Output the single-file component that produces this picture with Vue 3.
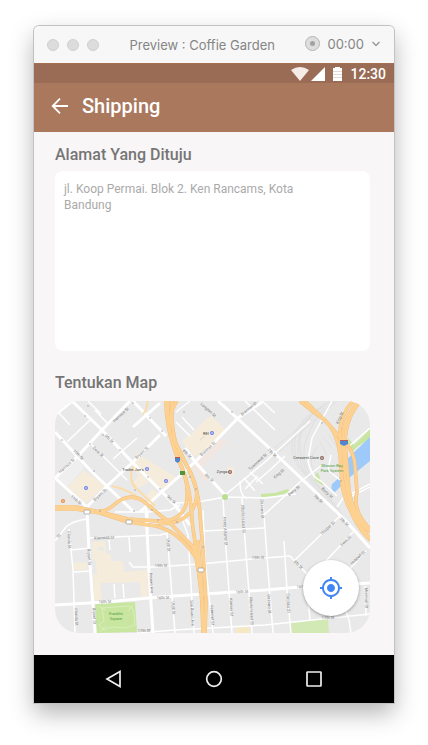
<script setup>
import { ref } from 'vue'

const address = ref('jl. Koop Permai. Blok 2. Ken Rancams, Kota\nBandung')

const minorRoads = [
  'M58 412L70 425', 'M67 442L90 420', 'M95 410L108 424', 'M113 459L137 438', 'M90 443L127 480',
  'M60 404L52 412', 'M88 401L101 414', 'M176 422L190 436', 'M182 417L194 430', 'M245 401L275 430', 'M262 401L275 413',
  'M190 401L176 412', 'M225 495L265 462L310 421', 'M240 481Q240 497 247 498', 'M244 478L255 491M250 472L263 484M245 489L258 476',
  'M175 503L198 502L225 497L265 498L296 494', 'M262 499L264 515L300 482L322 465',
  'M285 456L270 470L256 482', 'M340 454L370 428', 'M331 455L328 470L340 480', 'M332 401L312 438L308 460Q311 477 321 481L337 496',
  'M337 507L343 498L370 484', 'M350 497L370 487',
  'M223 498L225 535L232 633', 'M242 498L245 540L252 633', 'M264 515L268 570L273 633', 'M284 541L287 590L291 633',
  'M167 533L170 570L175 633', 'M176 503L188 535L194 633', 'M203 510L205 560L213 633', 'M115 512L147 512L170 510L180 505',
  'M90 538L160 535L168 533', 'M203 531L264 528', 'M155 567L200 564L265 558L290 556L305 572L312 579',
  'M129 562L133 567L160 567', 'M87 519Q72 521 66 527L55 541', 'M69 529L73 570L75 633',
  'M71 550L90 548', 'M74 572L91 571', 'M129 537L130 552', 'M109 540L110 550', 'M114 584L115 598M123 584L124 598',
  'M137 633L175 630L212 628L265 625L370 614', 'M295 560L340 516', 'M325 562L353 532', 'M345 574L366 551',
  'M308 598L310 620', 'M344 605L349 620L351 633', 'M365 586L366 616',
]
const majorRoads = [
  'M55 432L91 471L133 511', 'M72 401L102 430L133 463L174 504L190 525', 'M72 401L55 415', 'M133 401L166 436M185 448L196 463L225 495',
  'M160 403L133 427', 'M160 435L133 462L108 485L87 507', 'M130 401L102 430L77 457L55 478', 'M55 478L87 507',
  'M262 402L238 418L195 462L155 498L140 512', 'M218 401L238 419L265 444L345 520L370 548',
  'M87 510L89 550L95 633', 'M55 605L105 602L160 597L265 590L300 587L370 583',
  'M146 508L149 573L153 633', 'M147 510L147 530',
]
const rail = [
  'M337 401Q298 435 279 452', 'M334 401Q294 436 276 450', 'M330 401Q292 434 274 448', 'M327 403Q286 426 307 473L340 510',
  'M322 407Q287 430 303 469L337 508', 'M318 409Q283 433 300 467L337 512', 'M314 410Q280 438 298 466L338 516',
  'M324 408Q301 438 304 458Q307 477 342 514', 'M319 445Q303 464 320 477', 'M324 438L332 448M320 442L327 455M329 435L336 446',
]
const freeways = [
  'M98 511Q106 512 115 504Q132 490 148 505L172 525L193 547L199 565',
  'M55 507L76 507L100 512L128 519L158 521Q180 522 186 505C190 487 184 470 177 457Q167 430 168 401',
  'M158 523Q177 526 190 513Q199 501 196 488Q192 472 184 461Q170 440 172 401',
  'M55 509L76 509L100 513L128 522L156 526Q180 532 196 558L200 580',
  'M166 401Q166 426 174 447L183 471Q191 490 192 521L197 557L202 602L203 633',
  'M172 435L188 468Q199 490 200 515L203 550L206 602L205 633',
  'M177 401Q169 412 171 426',
  'M198 540L201 581L204 633',
]
const eastFreeways = [
  'M300 401Q312 411 322 418Q336 428 340 454L342 485Q346 506 355 517',
  'M305 401Q328 423 338 435Q354 448 355 466L357 492Q352 511 370 529',
  'M353 401Q338 417 340 440L342 478Q348 519 370 540',
  'M359 401Q342 419 343 440L345 477Q350 517 372 541',
  'M361 401Q346 416 345 443L349 490Q353 517 370 532',
]
const ramps = ['M133 467Q128 480 136 488L155 506', 'M148 401L146 410L143 414', 'M112 486Q130 489 146 504']

const streets = [
  ['Harrison St', 121, 415, -42], ['9th St', 109, 439, 45], ['10th St', 78, 455, 46], ['Dore St', 98, 452, 43],
  ['Harrison St', 67, 466, -42], ['Bryant St', 142, 453, -42], ['Bryant St', 100, 495, -42], ['11th St', 76, 500, 40],
  ['Langton St', 208, 410, 43], ['Brannan St', 249, 409, -40], ['Brannan St', 208, 449, -43], ['8th St', 187, 454, 44],
  ['8th St', 209, 478, 42], ['Townsend St', 258, 462, -42], ['9th St', 171, 500, 42], ['7th St', 272, 453, 44],
  ['King St', 279, 474, -40], ['Berry St', 294, 491, -39], ['7th St', 318, 499, 42], ['Berry St', 327, 493, 42],
  ['King St', 340, 418, -65], ['Florida St', 69, 540, 87], ['Bryant St', 89, 557, 86], ['Alameda St', 104, 538, -3],
  ['Potrero Ave', 151, 583, 86], ['16th St', 105, 602, -3], ['Florida St', 76, 617, 87], ['Bryant St', 94, 616, 87],
  ['17th St', 144, 631, -2], ['Utah St', 168, 545, 87], ['15th St', 161, 566, -3], ['Henry Adams St', 225, 531, 87],
  ['Rhode Island St', 243, 519, 87], ['De Haro St', 262, 509, 87], ['15th St', 258, 558, -3], ['16th St', 163, 598, -3],
  ['16th St', 242, 592, -3], ['Utah St', 173, 608, 87], ['San Bruno Ave', 192, 613, 87], ['Vermont St', 212, 615, 87],
  ['Kansas St', 231, 607, 87], ['Rhode Island St', 251, 611, 87], ['De Haro St', 269, 604, 87], ['Carolina St', 288, 603, 87],
  ['8th St', 298, 565, 45], ['16th St', 303, 587, -3], ['Hooper St', 328, 528, -43], ['7th St', 344, 522, 43],
  ['Irwin St', 346, 541, -43], ['Hubbell St', 358, 558, -43], ['Missouri St', 366, 598, 88], ['17th St', 328, 618, -3],
  ['St', 59, 536, -50],
]
const arrows = [
  [88, 406], [85, 416], [62, 440], [103, 435], [90, 444], [120, 450], [94, 471], [133, 403], [150, 418], [148, 477],
  [134, 511], [162, 431], [184, 412], [232, 412], [160, 489], [135, 490], [100, 511], [158, 520], [177, 522], [196, 489],
  [203, 547], [190, 477], [152, 510], [322, 423], [341, 481],
]
const places = [
  [86, 488, '#6f7fe8'], [147, 469, '#6f7fe8'], [166, 481, '#6f7fe8'], [212, 433, '#6f7fe8'], [63, 501, '#ef8a35'],
  [230, 472, '#8d6257'], [322, 458, '#8d6257'],
]
const shields = [[87, 512], [129, 522], [201, 570]]
</script>

<template>
  <main class="page">
    <section class="window">
      <header class="titlebar">
        <div class="lights"><i></i><i></i><i></i></div>
        <h1 class="window-title">Preview : Coffie Garden</h1>
        <div class="recorder">
          <button class="record" type="button" aria-label="Record"><i></i></button>
          <span class="timer">00:00</span>
          <svg class="chevron" viewBox="0 0 10 6"><path d="M1.500 1L5 4.500L8.500 1" /></svg>
        </div>
      </header>

      <div class="status">
        <svg class="signals" viewBox="0 0 52 14">
          <path d="M1 3Q10-3 19 3L10 14Z" fill="#f5ece8" />
          <path d="M35 0V14H21Z" fill="#fff" />
          <path d="M43 1H45V0H50V1H52V14H43Z" fill="#fff" />
          <path d="M43 4.500H52M43 7.500H52M43 10.500H52" stroke="#e4dad5" stroke-width="1" />
        </svg>
        <span>12:30</span>
      </div>

      <header class="appbar">
        <button type="button" class="back" aria-label="Kembali">
          <svg viewBox="0 0 24 24"><path d="M20 12H5.500M12 4.700L4.700 12L12 19.300" /></svg>
        </button>
        <h2>Shipping</h2>
      </header>

      <div class="content">
        <label class="heading" for="address">Alamat Yang Dituju</label>
        <textarea id="address" v-model="address" class="address" spellcheck="false"></textarea>

        <h3 class="heading">Tentukan Map</h3>
        <div class="map">
          <svg class="map-drawing" viewBox="55 401 315 232">
            <rect x="55" y="401" width="315" height="232" fill="#e9e9e9" />
            <g fill="#f5ecdb">
              <path d="M68 487L84 470L105 486L85 504Z" />
              <path d="M137 453L177 478L162 490L133 470Z" />
              <path d="M140 474L149 482L135 490L134 482ZM152 489L160 494L152 501L146 496Z" />
              <path d="M181 441L192 433L204 421L211 416L226 430L214 441L195 457Z" />
              <path d="M227 467H234V475H227Z" />
              <path d="M92 542L105 541L106 553L111 555V561L123 561L124 572L147 570L148 597L141 597L140 582L100 583L102 600L94 600L93 575L97 573L96 561L92 559Z" />
              <path d="M74 562L87 563V570H73Z" />
              <path d="M236 628L249 627L250 633H236Z" fill="#f7e8c4" />
            </g>
            <path d="M215 439L228 441L207 461L201 471L212 481L204 480L190 466Z" fill="#f1e7e0" />
            <path d="M55 478L77 457L84 468L67 487Z" fill="#efefef" />
            <path d="M98 547H104V551H98Z" fill="#e9e9e9" />
            <path d="M200 440L205 436" stroke="#e5d9c5" />
            <g fill="#c8e6a0">
              <path d="M95 604L135 602L137 632L97 633Z" />
              <path d="M291 622L328 619L329 633H291Z" fill="#d3e9b5" />
              <path d="M348 438L354 445L370 429V439L358 446L352 452L346 447Z" />
              <path d="M315 475L318 472L320 479L324 484L322 485L315 480Z" />
              <path d="M261 494L275 493L288 489L290 492L276 496L261 497Z" />
            </g>
            <path d="M332 484L340 477L342 464L370 437V461L349 478L335 492Q330 490 332 484Z" fill="#9dcafb" />
            <g class="rail"><path v-for="d in rail" :key="d" :d="d" /></g>
            <g class="minor"><path v-for="d in minorRoads" :key="d" :d="d" /></g>
            <g class="major"><path v-for="d in majorRoads" :key="d" :d="d" /></g>
            <path class="park-path" d="M102 608L127 606Q134 606 134 615L135 625L125 628L112 627L104 630L99 625L104 621L102 608M99 606L105 610M133 605L128 611M100 631L107 626" />
            <g class="ramp"><path v-for="d in ramps" :key="d" :d="d" /></g>
            <g class="freeway-edge"><path v-for="d in freeways" :key="d" :d="d" /></g>
            <g class="freeway"><path v-for="d in freeways" :key="d" :d="d" /></g>
            <g class="freeway-edge"><path v-for="d in eastFreeways" :key="d" :d="d" /></g>
            <g class="freeway"><path v-for="d in eastFreeways" :key="d" :d="d" /></g>
            <circle cx="225" cy="497" r="3" fill="#b9e08f" />
            <circle v-for="(a, i) in arrows" :key="'a' + i" :cx="a[0]" :cy="a[1]" r="0.7" fill="#8d94b8" />
            <g class="street">
              <text v-for="(s, i) in streets" :key="'s' + i" :transform="`translate(${s[1]} ${s[2]}) rotate(${s[3]})`" y="1">{{ s[0] }}</text>
            </g>
            <g class="place">
              <text x="133" y="471">Trader Joe's</text>
              <text x="206" y="435">REI</text>
              <text x="222" y="473">Zynga</text>
              <text x="306" y="459">Crescent Cove</text>
            </g>
            <g class="park">
              <text x="332" y="467">Mission Bay</text>
              <text x="332" y="472">Park System</text>
              <text x="116" y="615">Franklin</text>
              <text x="116" y="620">Square</text>
            </g>
            <g v-for="(p, i) in places" :key="'p' + i">
              <circle :cx="p[0]" :cy="p[1]" r="2" :fill="p[2]" />
              <circle :cx="p[0]" :cy="p[1]" r="0.8" fill="#eef" />
            </g>
            <rect v-for="(s, i) in shields" :key="'h' + i" :x="s[0] - 3" :y="s[1] - 2" width="6" height="4" rx="1" fill="#fff" stroke="#99968b" stroke-width="0.7" />
            <rect x="180" y="471" width="5" height="4" fill="#4d963f" />
            <path d="M175 458H180V461L177.500 463L175 461Z" fill="#4f86cf" />
            <path d="M175 457H180V458H175Z" fill="#c6544d" />
            <path d="M340 441H348V444L344 446L340 444Z" fill="#4f86cf" />
            <path d="M340 440H348V441H340Z" fill="#b65b61" />
          </svg>
          <button class="locate" type="button" aria-label="Lokasi saya">
            <svg viewBox="0 0 24 24"><path d="M12 8c-2.210 0-4 1.790-4 4s1.790 4 4 4 4-1.790 4-4-1.790-4-4-4zm8.940 3c-.46-4.170-3.770-7.480-7.940-7.940V1h-2v2.060C6.830 3.520 3.520 6.830 3.060 11H1v2h2.060c.46 4.170 3.770 7.480 7.940 7.940V23h2v-2.060c4.170-.46 7.480-3.770 7.940-7.940H23v-2h-2.060zM12 19c-3.870 0-7-3.130-7-7s3.130-7 7-7 7 3.130 7 7-3.130 7-7 7z" /></svg>
          </button>
        </div>
      </div>

      <nav class="navbar">
        <button type="button" aria-label="Back"><svg viewBox="0 0 18 18"><path d="M15 1.500V16.500L2 9Z" /></svg></button>
        <button type="button" aria-label="Home"><svg viewBox="0 0 18 18"><circle cx="9" cy="9" r="7.300" /></svg></button>
        <button type="button" aria-label="Recent"><svg viewBox="0 0 18 18"><rect x="2" y="2" width="14" height="14" rx="0.500" /></svg></button>
      </nav>
    </section>
  </main>
</template>

<style>
body {
  background: #fff;
}
</style>

<style scoped>
* {
  box-sizing: border-box;
}
.page {
  padding: 26px 34px 42px;
  font-family: Roboto, "Liberation Sans", sans-serif;
}
button {
  padding: 0;
  border: 0;
  background: none;
  display: flex;
  align-items: center;
  justify-content: center;
}
h1, h2, h3 {
  margin: 0;
}
.window {
  border-radius: 5px 5px 0 0;
  box-shadow: 0 0 0 1px #c2c2c2, 0 10px 24px rgba(0, 0, 0, 0.3);
  background: #f8f6f7;
}
.titlebar {
  height: 37px;
  padding: 0 13px;
  display: flex;
  justify-content: space-between;
  align-items: center;
  background: #f7f7f7;
  border-radius: 5px 5px 0 0;
  color: #858585;
}
.lights {
  display: flex;
  gap: 8px;
}
.lights i {
  width: 12px;
  height: 12px;
  border-radius: 50%;
  background: #dcdcdc;
  border: 1px solid #d0d0d0;
}
.window-title {
  font: 400 13px/20px Inter, Roboto, sans-serif;
}
.recorder {
  display: flex;
  align-items: center;
  gap: 7px;
  padding-bottom: 2px;
}
.record {
  width: 15px;
  height: 15px;
  border-radius: 50%;
  border: 1px solid #b5b5b5;
  background: #dedede;
}
.record i {
  width: 5px;
  height: 5px;
  border-radius: 50%;
  background: #a2a2a2;
}
.timer {
  font: 400 13px/20px Inter, Roboto, sans-serif;
}
.chevron {
  width: 10px;
  height: 6px;
  fill: none;
  stroke: #9b9b9b;
  stroke-width: 1.5;
}
.status {
  height: 20px;
  padding: 0 8px;
  border-top: 1px solid #a66f52;
  display: flex;
  align-items: center;
  justify-content: flex-end;
  gap: 8px;
  background: #9a6c55;
  color: #fff;
  font-size: 14px;
  font-weight: 500;
  line-height: 18px;
}
.signals {
  width: 52px;
  height: 14px;
}
.appbar {
  height: 49px;
  padding: 0 14px 4px;
  display: flex;
  align-items: center;
  gap: 10px;
  background: #aa785d;
  color: #fff;
}
.appbar h2 {
  font-size: 20px;
  font-weight: 500;
  line-height: 24px;
}
.back svg {
  width: 24px;
  height: 24px;
  fill: none;
  stroke: #fff;
  stroke-width: 1.8;
}
.content {
  padding: 13px 24px 22px 21px;
}
.heading {
  display: block;
  font-size: 16px;
  font-weight: 500;
  line-height: 20px;
  color: #757575;
}
.address {
  display: block;
  width: 100%;
  height: 180px;
  margin: 6px 0 22px;
  padding: 10px 9px;
  border: 0;
  border-radius: 8px;
  outline: 0;
  resize: none;
  background: #fff;
  color: #aaa;
  font: 400 12px/16px Roboto, sans-serif;
}
.map {
  position: relative;
  margin-top: 8px;
  border-radius: 24px;
  overflow: hidden;
}
.map-drawing {
  display: block;
  width: 100%;
}
.map-drawing g path {
  stroke-linejoin: round;
}
.rail {
  fill: none;
  stroke: #dadada;
  stroke-width: 0.6;
}
.minor {
  fill: none;
  stroke: #fff;
  stroke-width: 1.5;
}
.major {
  fill: none;
  stroke: #fff;
  stroke-width: 3;
}
.park-path {
  fill: none;
  stroke: #e0f2c9;
  stroke-width: 0.7;
}
.ramp {
  fill: none;
  stroke: #fbdca8;
  stroke-width: 2;
}
.freeway-edge {
  fill: none;
  stroke: #f1bd78;
  stroke-width: 3.6;
}
.freeway {
  fill: none;
  stroke: #fdd191;
  stroke-width: 2.8;
}
.street, .place, .park {
  font-size: 4px;
  text-anchor: middle;
  fill: #777;
}
.place {
  fill: #444;
}
.park {
  fill: #4f9b3c;
}
.locate {
  position: absolute;
  right: 11px;
  bottom: 17px;
  width: 56px;
  height: 56px;
  border-radius: 50%;
  background: #fff;
  box-shadow: 0 1px 3px rgba(0, 0, 0, 0.35);
}
.locate svg {
  width: 24px;
  height: 24px;
  fill: #4285f4;
}
.navbar {
  height: 48px;
  padding: 0 30px;
  display: grid;
  grid-template-columns: repeat(3, 1fr);
  align-items: center;
  background: #000;
}
.navbar svg {
  width: 18px;
  height: 18px;
  fill: none;
  stroke: #eee;
  stroke-width: 1.7;
}
</style>
